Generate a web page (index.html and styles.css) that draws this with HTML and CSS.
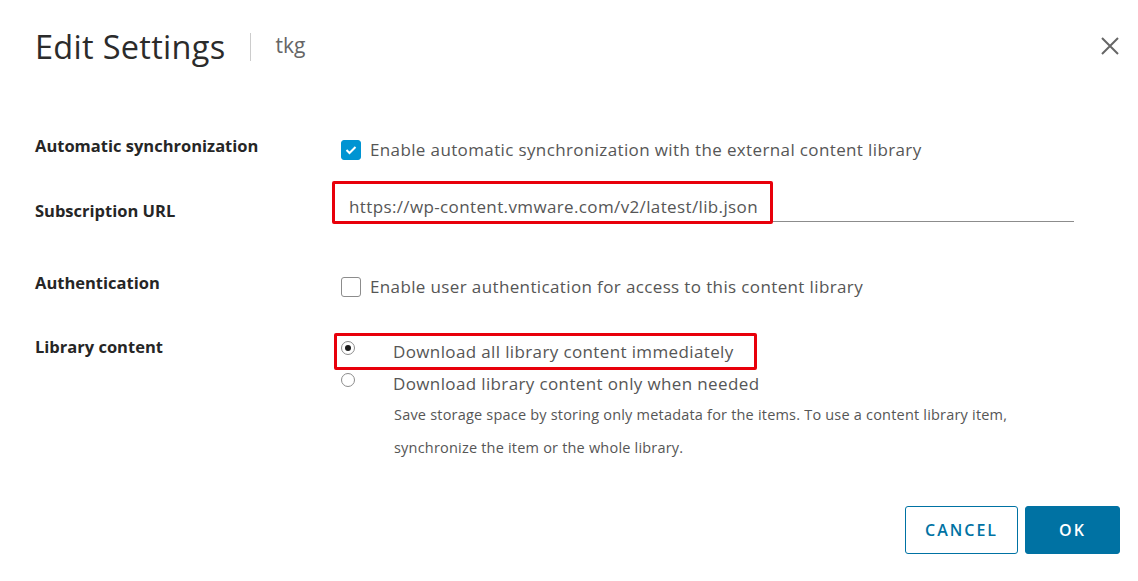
FILE: index.html
```html
<!DOCTYPE html>
<html lang="en">
<head>
    <meta charset="UTF-8">
    <title>Edit Settings</title>
    <link rel="stylesheet" href="styles.css">
</head>
<body>
    <div class="modal">
        <div class="modal-header">
            <h3 class="modal-title">Edit Settings</h3>
            <span class="title-sep"></span>
            <span class="modal-sub">tkg</span>
            <button class="close" aria-label="Close">
                <svg width="20" height="20" viewBox="0 0 20 20">
                    <path d="M2 2 L18 18 M18 2 L2 18" stroke="#666" stroke-width="2" fill="none"/>
                </svg>
            </button>
        </div>

        <div class="form">
            <div class="row row-sync">
                <label class="lbl">Automatic synchronization</label>
                <div class="ctl">
                    <span class="check on">
                        <svg width="12" height="10" viewBox="0 0 12 10">
                            <path d="M1.5 5 L4.5 8 L10.5 2" stroke="#fff" stroke-width="2" fill="none"/>
                        </svg>
                    </span>
                    <span class="txt">Enable automatic synchronization with the external content library</span>
                </div>
            </div>

            <div class="row row-url">
                <label class="lbl">Subscription URL</label>
                <div class="ctl url">
                    <span class="txt">https://wp-content.vmware.com/v2/latest/lib.json</span>
                    <span class="mark mark-url"></span>
                </div>
            </div>

            <div class="row row-auth">
                <label class="lbl">Authentication</label>
                <div class="ctl">
                    <span class="check"></span>
                    <span class="txt">Enable user authentication for access to this content library</span>
                </div>
            </div>

            <div class="row row-lib">
                <label class="lbl">Library content</label>
                <div class="ctl-col">
                    <div class="radio-line">
                        <span class="radio on"></span>
                        <span class="txt">Download all library content immediately</span>
                        <span class="mark mark-radio"></span>
                    </div>
                    <div class="radio-line">
                        <span class="radio"></span>
                        <span class="txt">Download library content only when needed</span>
                    </div>
                    <p class="help">Save storage space by storing only metadata for the items. To use a content library item,<br>synchronize the item or the whole library.</p>
                </div>
            </div>
        </div>

        <div class="modal-footer">
            <button class="btn btn-outline">CANCEL</button>
            <button class="btn btn-primary">OK</button>
        </div>
    </div>
</body>
</html>
```

FILE: styles.css
```css
body {
    margin: 0;
    background: #fff;
    font-family: "Open Sans", Lato, sans-serif;
    color: #565656;
}
.modal {
    width: 1138px;
    height: 581px;
    box-sizing: border-box;
    padding: 0 18px 0 35px;
    position: relative;
}
.modal-header {
    display: flex;
    align-items: center;
    height: 92px;
}
.modal-title {
    margin: 0;
    font-size: 32.5px;
    font-weight: 400;
    color: #2b2b2b;
    letter-spacing: 0.3px;
}
.title-sep {
    width: 1px;
    height: 28px;
    background: #ccc;
    margin: 2px 25px 0 24px;
}
.modal-sub {
    font-size: 21px;
    color: #666;
    margin-top: -2px;
}
.close {
    margin-left: auto;
    background: none;
    border: 0;
    padding: 0;
    width: 20px;
    height: 20px;
}
.form {
    display: flex;
    flex-direction: column;
}
.row {
    display: flex;
    align-items: flex-start;
}
.lbl {
    width: 306px;
    flex: none;
    font-size: 16.5px;
    line-height: 20px;
    font-weight: 700;
    color: #262626;
}
.ctl {
    display: flex;
    align-items: center;
    position: relative;
    height: 20px;
    margin-top: 4px;
}
.txt {
    font-size: 17px;
    line-height: 20px;
    letter-spacing: 0.37px;
    color: #565656;
}
.check {
    width: 20px;
    height: 20px;
    border: 1px solid #8c8c8c;
    border-radius: 3px;
    box-sizing: border-box;
    margin-right: 9px;
    display: flex;
    align-items: center;
    justify-content: center;
}
.check.on {
    background: #0094d2;
    border-color: #0094d2;
}
.row-sync {
    margin-top: 44px;
}
.row-url {
    margin-top: 41px;
}
.url {
    width: 739px;
    height: 36px;
    border-bottom: 1px solid #8c8c8c;
    margin: -15px 0 0 -6px;
    padding: 0 0 4px 14px;
    box-sizing: border-box;
    align-items: flex-end;
}
.mark {
    position: absolute;
    border: 3px solid #e8000b;
    border-radius: 2px;
    pointer-events: none;
}
.mark-url {
    left: -3px;
    top: -5px;
    width: 435px;
    height: 37px;
}
.row-auth {
    margin-top: 51px;
}
.row-lib {
    margin-top: 40px;
}
.ctl-col {
    display: flex;
    flex-direction: column;
    margin-top: -1px;
}
.radio-line {
    display: flex;
    align-items: center;
    position: relative;
    height: 32px;
}
.radio {
    width: 14px;
    height: 14px;
    border: 1px solid #8c8c8c;
    border-radius: 50%;
    box-sizing: border-box;
    margin-right: 38px;
    position: relative;
    top: -4px;
}
.radio.on::after {
    content: "";
    position: absolute;
    left: 3px;
    top: 3px;
    width: 6px;
    height: 6px;
    border-radius: 50%;
    background: #1a1a1a;
}
.mark-radio {
    left: -7px;
    top: -3px;
    width: 417px;
    height: 31px;
}
.help {
    margin: -2px 0 0 53px;
    font-size: 14.5px;
    line-height: 33px;
    letter-spacing: 0.2px;
    color: #565656;
}
.modal-footer {
    position: absolute;
    right: 18px;
    top: 506px;
    display: flex;
    gap: 7px;
}
.btn {
    height: 48px;
    border-radius: 3px;
    font-family: "Open Sans", Lato, sans-serif;
    font-size: 16px;
    font-weight: 600;
    letter-spacing: 2px;
    padding: 0;
}
.btn-outline {
    width: 113px;
    background: #fff;
    border: 1px solid #0072a3;
    color: #0072a3;
}
.btn-primary {
    width: 95px;
    background: #0072a3;
    border: 1px solid #0072a3;
    color: #fff;
}
```
